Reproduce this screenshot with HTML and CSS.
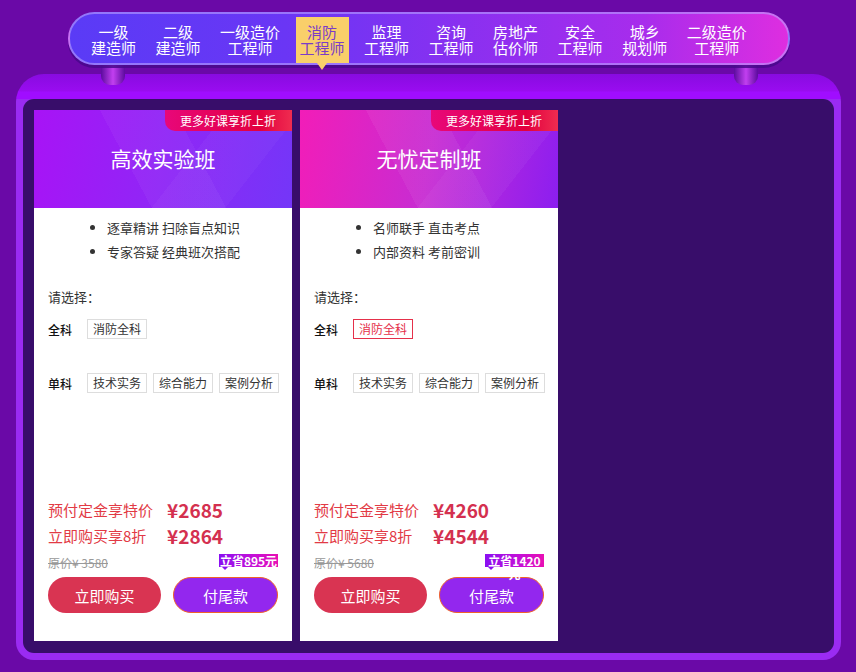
FILE: index.html
```html
<!DOCTYPE html>
<html lang="zh-CN">
<head>
<meta charset="utf-8">
<title>消防工程师</title>
<link rel="stylesheet" href="styles.css">
</head>
<body>
<div class="page">
  <nav class="nav">
    <a class="nav-item"><span class="nl">一级</span><span class="nl">建造师</span></a>
    <a class="nav-item"><span class="nl">二级</span><span class="nl">建造师</span></a>
    <a class="nav-item"><span class="nl">一级造价</span><span class="nl">工程师</span></a>
    <a class="nav-item active"><span class="nl">消防</span><span class="nl">工程师</span></a>
    <a class="nav-item"><span class="nl">监理</span><span class="nl">工程师</span></a>
    <a class="nav-item"><span class="nl">咨询</span><span class="nl">工程师</span></a>
    <a class="nav-item"><span class="nl">房地产</span><span class="nl">估价师</span></a>
    <a class="nav-item"><span class="nl">安全</span><span class="nl">工程师</span></a>
    <a class="nav-item"><span class="nl">城乡</span><span class="nl">规划师</span></a>
    <a class="nav-item"><span class="nl">二级造价</span><span class="nl">工程师</span></a>
  </nav>
  <div class="frame">
    <span class="peg peg-l"></span>
    <span class="peg peg-r"></span>
    <div class="frame-inner">
      <div class="card">
        <div class="card-head head-1">
          <span class="hot">更多好课享折上折</span>
          <h2 class="card-title">高效实验班</h2>
        </div>
        <div class="card-body">
          <ul class="features">
            <li>逐章精讲 扫除盲点知识</li>
            <li>专家答疑 经典班次搭配</li>
          </ul>
          <p class="choose">请选择：</p>
          <div class="opt-row">
            <span class="opt-label">全科</span>
            <span class="opt">消防全科</span>
          </div>
          <div class="opt-row opt-row-2">
            <span class="opt-label">单科</span>
            <span class="opt">技术实务</span>
            <span class="opt">综合能力</span>
            <span class="opt">案例分析</span>
          </div>
          <div class="price-row price-row-1">
            <span class="price-label">预付定金享特价</span>
            <span class="price">¥2685</span>
          </div>
          <div class="price-row">
            <span class="price-label">立即购买享8折</span>
            <span class="price">¥2864</span>
          </div>
          <div class="orig-row">
            <span class="orig">原价¥ 3580</span>
            <span class="save">立省895元</span>
          </div>
          <div class="btns">
            <button class="btn btn-buy">立即购买</button>
            <button class="btn btn-tail">付尾款</button>
          </div>
        </div>
      </div>
      <div class="card">
        <div class="card-head head-2">
          <span class="hot">更多好课享折上折</span>
          <h2 class="card-title">无忧定制班</h2>
        </div>
        <div class="card-body">
          <ul class="features">
            <li>名师联手 直击考点</li>
            <li>内部资料 考前密训</li>
          </ul>
          <p class="choose">请选择：</p>
          <div class="opt-row">
            <span class="opt-label">全科</span>
            <span class="opt sel">消防全科</span>
          </div>
          <div class="opt-row opt-row-2">
            <span class="opt-label">单科</span>
            <span class="opt">技术实务</span>
            <span class="opt">综合能力</span>
            <span class="opt">案例分析</span>
          </div>
          <div class="price-row price-row-1">
            <span class="price-label">预付定金享特价</span>
            <span class="price">¥4260</span>
          </div>
          <div class="price-row">
            <span class="price-label">立即购买享8折</span>
            <span class="price">¥4544</span>
          </div>
          <div class="orig-row">
            <span class="orig">原价¥ 5680</span>
            <span class="save">立省1420元</span>
          </div>
          <div class="btns">
            <button class="btn btn-buy">立即购买</button>
            <button class="btn btn-tail">付尾款</button>
          </div>
        </div>
      </div>
    </div>
  </div>
</div>
</body>
</html>
```
FILE: styles.css
```css
body {
  margin: 0;
  background: #6a09a7;
  font-family: "Noto Sans CJK SC", "Noto Sans", sans-serif;
}
.page {
  width: 856px;
  height: 672px;
  overflow: hidden;
  padding-top: 12px;
  box-sizing: border-box;
}

/* ---------- nav ---------- */
.nav {
  position: relative;
  z-index: 2;
  margin-left: 68px;
  width: 722px;
  height: 53px;
  box-sizing: border-box;
  border-radius: 27px;
  border: 2px solid rgba(185, 160, 255, 0.6);
  background: linear-gradient(90deg, #5a3bf6 0%, #6a36f5 30%, #8a30f0 55%, #a82cec 80%, #de2ee0 100%);
  box-shadow: 0 3px 0 rgba(72, 8, 140, 0.85);
  display: flex;
  align-items: flex-end;
  gap: 11.5px;
  padding-left: 17px;
}
.nav-item {
  position: relative;
  display: flex;
  flex-direction: column;
  align-items: center;
  color: #fff;
  font-size: 15px;
  padding: 7px 4px;
  white-space: nowrap;
}
.nl {
  display: block;
  height: 16px;
  line-height: 16px;
  overflow: visible;
}
.nav-item.active {
  background: #f9cf6a;
  color: #7a3cc8;
}
.nav-item.active::after {
  content: "";
  position: absolute;
  left: 50%;
  top: 100%;
  margin-left: -5px;
  border-left: 5px solid transparent;
  border-right: 5px solid transparent;
  border-top: 7px solid #f9cf6a;
}

/* ---------- frame ---------- */
.frame {
  position: relative;
  margin: 9px 0 0 16px;
  width: 825px;
  height: 586px;
  box-sizing: border-box;
  border-radius: 28px 28px 18px 18px;
  padding: 25px 7px 7px;
  background: linear-gradient(180deg, #880be0 0, #990cf0 17px, #a00dff 18px, #a00dff 25px, #9a2bf2 25px);
}
.peg {
  position: absolute;
  top: -11px;
  width: 24px;
  height: 22px;
  border-radius: 0 0 9px 9px;
  background: linear-gradient(90deg, #5c0c9e, #c23ff0 50%, #5c0c9e);
  z-index: 1;
}
.peg-l { left: 85px; }
.peg-r { right: 83px; }
.frame-inner {
  height: 100%;
  box-sizing: border-box;
  background: #380d6a;
  border-radius: 11px;
  padding: 11px 11px 12px;
  display: flex;
  gap: 8px;
}

/* ---------- card ---------- */
.card {
  width: 258px;
  background: #fff;
  display: flex;
  flex-direction: column;
}
.card-head {
  position: relative;
  height: 98px;
}
.head-1 {
  background:
    linear-gradient(62deg, rgba(255,255,255,0) 38%, rgba(255,255,255,0.04) 38%, rgba(255,255,255,0.04) 62%, rgba(255,255,255,0) 62%),
    linear-gradient(128deg, rgba(255,255,255,0) 58%, rgba(255,255,255,0.03) 58%, rgba(255,255,255,0.03) 80%, rgba(255,255,255,0) 80%),
    linear-gradient(100deg, #a813f6 0%, #9026f6 50%, #7436f8 100%);
}
.head-2 {
  background:
    linear-gradient(62deg, rgba(255,255,255,0) 38%, rgba(255,255,255,0.05) 38%, rgba(255,255,255,0.05) 62%, rgba(255,255,255,0) 62%),
    linear-gradient(128deg, rgba(255,255,255,0) 58%, rgba(255,255,255,0.04) 58%, rgba(255,255,255,0.04) 80%, rgba(255,255,255,0) 80%),
    linear-gradient(100deg, #f21db8 0%, #c82cd2 50%, #8c1ef0 100%);
}
.hot {
  position: absolute;
  top: 0;
  right: 0;
  height: 21px;
  line-height: 21px;
  padding: 0 16px 0 15px;
  font-size: 12px;
  color: #fff;
  border-radius: 0 0 0 10px;
  background: linear-gradient(90deg, #e8077a, #e2003e 75%, #ef2c50);
}
.card-title {
  margin: 0;
  font-weight: 400;
  font-size: 21px;
  line-height: 96px;
  color: #fff;
  text-align: center;
}
.card-body {
  padding: 0 14px 28px;
}
.features {
  margin: 0;
  padding: 8px 0 0 59px;
  font-size: 13px;
  line-height: 24px;
  color: #333;
}
.choose {
  margin: 23px 0 0;
  font-size: 13px;
  line-height: 20px;
  color: #333;
}
.opt-row {
  display: flex;
  align-items: center;
  gap: 6px;
  height: 20px;
  margin-top: 12px;
}
.opt-row-2 { margin-top: 34px; }
.opt-label {
  flex: 0 0 33px;
  font-size: 12px;
  color: #111;
  font-weight: 500;
}
.opt {
  flex: 0 0 auto;
  white-space: nowrap;
  height: 20px;
  box-sizing: border-box;
  border: 1px solid #ddd;
  padding: 0 5px;
  font-size: 12px;
  line-height: 18px;
  color: #333;
}
.opt.sel {
  border-color: #e5304a;
  color: #e5304a;
}
.price-row {
  display: flex;
  align-items: center;
  height: 26px;
}
.price-row-1 { margin-top: 103px; }
.price-label {
  width: 119px;
  font-size: 15px;
  color: #e23a45;
}
.price {
  font-size: 19px;
  font-weight: bold;
  color: #d4304f;
}
.orig-row {
  display: flex;
  justify-content: space-between;
  margin-top: 7px;
  height: 16px;
}
.orig {
  font-size: 12px;
  line-height: 16px;
  color: #999;
  text-decoration: line-through;
}
.save {
  position: relative;
  z-index: 1;
  width: 59px;
  height: 13px;
  margin-top: -1px;
  font-size: 12px;
  line-height: 13px;
  font-weight: bold;
  color: #fff;
  text-align: center;
  background: linear-gradient(90deg, #8a0ff2, #c610d6 60%, #e80fb4);
}
.save::after {
  content: "";
  position: absolute;
  left: 3px;
  top: 13px;
  border-left: 3px solid transparent;
  border-right: 3px solid transparent;
  border-top: 3px solid #8a0ff2;
}
.btns {
  display: flex;
  gap: 12px;
  margin-top: 6px;
}
.btn {
  height: 36px;
  border-radius: 18px;
  border: 0;
  font-family: inherit;
  font-size: 15px;
  color: #fff;
  padding: 0;
}
.btn-buy {
  width: 113px;
  background: #d93452;
}
.btn-tail {
  flex: 1;
  background: #9327ee;
  border: 1px solid #f0622a;
}
```
